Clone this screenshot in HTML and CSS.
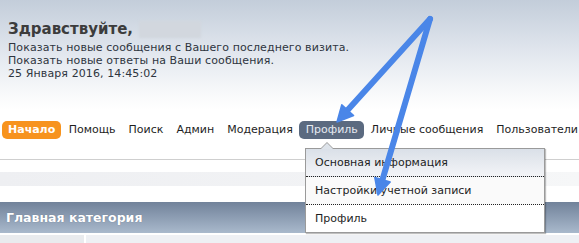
FILE: index.html
```html
<!DOCTYPE html>
<html lang="ru">
<head>
<meta charset="utf-8">
<link rel="stylesheet" href="styles.css">
</head>
<body>
<div class="page">
  <header class="top">
    <h1 class="hello">Здравствуйте, <span class="name"></span></h1>
    <div class="info">
      <div>Показать новые сообщения с Вашего последнего визита.</div>
      <div>Показать новые ответы на Ваши сообщения.</div>
      <div>25 Января 2016, 14:45:02</div>
    </div>
  </header>
  <nav class="nav">
    <span class="item home">Начало</span>
    <span class="item">Помощь</span>
    <span class="item">Поиск</span>
    <span class="item">Админ</span>
    <span class="item">Модерация</span>
    <span class="item active">Профиль</span>
    <span class="item">Личные сообщения</span>
    <span class="item">Пользователи</span>
  </nav>
  <div class="rule"></div>
  <div class="band"></div>
  <div class="catbar">Главная категория</div>
  <div class="cells"><div class="cell-a"></div><div class="cell-b"></div></div>

  <div class="menu">
    <div class="notch"></div>
    <div class="mi first">Основная информация</div>
    <div class="mi">Настройки учетной записи</div>
    <div class="mi last">Профиль</div>
  </div>

  <svg class="arrows" width="579" height="243" viewBox="0 0 579 243">
    <g stroke="#4a86e8" stroke-width="6" stroke-linecap="round" fill="#4a86e8">
      <line x1="430" y1="19" x2="347.7" y2="110.1"/>
      <line x1="430" y1="19" x2="382.5" y2="179.7"/>
    </g>
    <g fill="#4a86e8" stroke="#4a86e8" stroke-width="1.5" stroke-linejoin="round">
      <polygon points="337,122 353.6,115.5 341.8,104.7"/>
      <polygon points="378,195 390.2,182 374.8,177.4"/>
    </g>
  </svg>
</div>
</body>
</html>
```
FILE: styles.css
```css
* { box-sizing: border-box; }
html, body { margin: 0; padding: 0; }
body {
  width: 579px;
  height: 243px;
  overflow: hidden;
  font-family: "DejaVu Sans", Verdana, sans-serif;
  background: #fff;
}
.page {
  position: relative;
  width: 579px;
  height: 243px;
  overflow: hidden;
  background: linear-gradient(to bottom, #c3cdda 0px, #e3e8ef 55px, #f9fafb 95px, #ffffff 110px);
}
.top {
  padding: 20px 0 0 8px;
}
.hello {
  margin: 0;
  font-size: 15px;
  line-height: 18px;
  font-weight: bold;
  color: #3c3c3c;
  display: flex;
  align-items: center;
}
.name {
  display: inline-block;
  width: 62px;
  height: 17px;
  margin-left: 6px;
  background: #d2d7de;
  filter: blur(1px);
}
.info {
  margin-top: 3px;
  font-size: 11px;
  line-height: 13px;
  color: #2e3540;
  letter-spacing: 0.1px;
}
.nav {
  display: flex;
  margin-top: 41px;
  padding-left: 2px;
  font-size: 11px;
  line-height: 14px;
  color: #1e1e1e;
}
.item {
  padding: 2px 6.5px;
  border-radius: 5px;
  white-space: nowrap;
}
.item.home {
  background: #f7931e;
  color: #fff;
  font-weight: bold;
  padding: 2px 6px;
  margin-right: 1px;
}
.item.active {
  background: #5b6a80;
  color: #e6ebf2;
}
.rule {
  margin-top: 20px;
  height: 1px;
  background: #cfcfcf;
}
.band {
  margin-top: 12px;
  height: 14px;
  background: linear-gradient(to right, #eeeff2, #f2f3f5 60%, #f6f7f8);
}
.catbar {
  margin-top: 16px;
  height: 31px;
  padding-left: 6px;
  display: flex;
  align-items: center;
  font-size: 12.5px;
  font-weight: bold;
  color: #fff;
  text-shadow: 0 0 1px rgba(40,50,70,0.4);
  background: linear-gradient(to bottom, #71829a, #a9b9cc);
}
.cells {
  margin-top: 2px;
  display: flex;
  gap: 2px;
  height: 12px;
}
.cell-a { width: 84px; background: #e9ebee; }
.cell-b { flex: 1; background: #eef0f4; }

.menu {
  position: absolute;
  left: 305px;
  top: 148px;
  width: 240px;
  height: 85px;
  border: 1px solid #9a9a9a;
  background: #fff;
  box-shadow: 1px 1px 1px rgba(0,0,0,0.25);
  font-size: 11px;
  color: #1e1e1e;
  display: flex;
  flex-direction: column;
}
.notch {
  position: absolute;
  left: 14px;
  top: -7px;
  width: 0;
  height: 0;
  border-left: 7px solid transparent;
  border-right: 7px solid transparent;
  border-bottom: 7px solid #9a9a9a;
}
.notch::after {
  content: "";
  position: absolute;
  left: -6px;
  top: 1px;
  border-left: 6px solid transparent;
  border-right: 6px solid transparent;
  border-bottom: 6px solid #dde3ea;
}
.mi {
  flex: 1;
  display: flex;
  align-items: center;
  padding-left: 9px;
  border-bottom: 1px dotted #222;
  background: #fafafa;
}
.mi.first {
  background: linear-gradient(to bottom, #dae0e8, #f3f4f7);
}
.mi.last {
  border-bottom: none;
  background: #fff;
}
.arrows {
  position: absolute;
  left: 0;
  top: 0;
  pointer-events: none;
}
```
